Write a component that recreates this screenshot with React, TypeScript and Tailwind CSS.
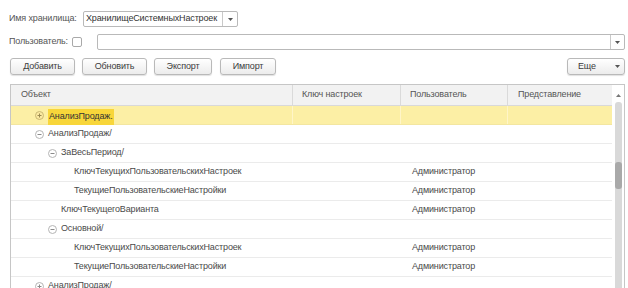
import React from "react";

const Arrow = () => (
  <svg width="5" height="3" viewBox="0 0 5 3"><path d="M0 0h5L2.5 3z" fill="#555" /></svg>
);

const TreeIcon = ({ plus, yellow }: { plus?: boolean; yellow?: boolean }) => (
  <svg width="9" height="9" viewBox="0 0 9 9" className="shrink-0">
    <circle cx="4.5" cy="4.5" r="4" fill={yellow ? "#fbe9a0" : "#fff"} stroke={yellow ? "#c9b873" : "#b4b4b4"} />
    <path d="M2.5 4.5h4" stroke={yellow ? "#9a8a50" : "#8a8a8a"} strokeWidth="1" />
    {plus && <path d="M4.5 2.5v4" stroke={yellow ? "#9a8a50" : "#8a8a8a"} strokeWidth="1" />}
  </svg>
);

const Btn = ({ children, w }: { children: React.ReactNode; w: string }) => (
  <div
    className={`${w} h-[17px] flex items-center justify-center rounded-[3px] border border-[#b9b9b9] bg-gradient-to-b from-white to-[#ececec] shadow-[0_1px_1px_rgba(0,0,0,0.12)] text-[#3c3c3c]`}
  >
    {children}
  </div>
);

type Row = { level: number; text: string; icon?: "plus" | "minus"; user?: string; selected?: boolean };

const rows: Row[] = [
  { level: 0, text: "АнализПродаж.", icon: "plus", selected: true },
  { level: 0, text: "АнализПродаж/", icon: "minus" },
  { level: 1, text: "ЗаВесьПериод/", icon: "minus" },
  { level: 2, text: "КлючТекущихПользовательскихНастроек", user: "Администратор" },
  { level: 2, text: "ТекущиеПользовательскиеНастройки", user: "Администратор" },
  { level: 1, text: "КлючТекущегоВарианта", user: "Администратор" },
  { level: 1, text: "Основной/", icon: "minus" },
  { level: 2, text: "КлючТекущихПользовательскихНастроек", user: "Администратор" },
  { level: 2, text: "ТекущиеПользовательскиеНастройки", user: "Администратор" },
  { level: 0, text: "АнализПродаж/", icon: "plus" },
];

const iconPad = ["pl-[24px]", "pl-[37px]", "pl-[50px]"];
const leafPad = ["pl-[37px]", "pl-[50px]", "pl-[63px]"];

export default function App() {
  return (
    <div className="w-[628px] h-[288px] overflow-hidden bg-white text-[#4a4a4a] text-[9px] tracking-[-0.15px] font-['Liberation_Sans',Arial,sans-serif]">
      <div className="pt-[11px] pl-[9px] pr-[3px] flex flex-col">
        {/* Row 1 */}
        <div className="flex items-center h-[16px]">
          <div className="w-[74px] text-[#555]">Имя хранилища:</div>
          <div className="flex h-[16px] border border-[#b9b9b9] rounded-[2px]">
            <div className="w-[138px] pl-[2px] flex items-center text-[#333] overflow-hidden whitespace-nowrap">ХранилищеСистемныхНастроек</div>
            <div className="w-[15px] shrink-0 border-l border-[#c9c9c9] flex items-center justify-center">
              <Arrow />
            </div>
          </div>
        </div>
        {/* Row 2 */}
        <div className="flex items-center h-[16px] mt-[7px]">
          <div className="w-[63px] text-[#555] whitespace-nowrap">Пользователь:</div>
          <div className="w-[10px] h-[10px] border border-[#a9a9a9] rounded-[2px] bg-white" />
          <div className="ml-[15px] flex-1 flex h-[16px] border border-[#b9b9b9] rounded-[2px]">
            <div className="flex-1" />
            <div className="w-[14px] border-l border-[#c9c9c9] flex items-center justify-center">
              <Arrow />
            </div>
          </div>
        </div>
        {/* Row 3 buttons */}
        <div className="flex items-center h-[17px] mt-[8px] pl-[1px]">
          <Btn w="w-[65px]">Добавить</Btn>
          <div className="ml-[7px]"><Btn w="w-[65px]">Обновить</Btn></div>
          <div className="ml-[7px]"><Btn w="w-[58px]">Экспорт</Btn></div>
          <div className="ml-[8px]"><Btn w="w-[56px]">Импорт</Btn></div>
          <div className="ml-auto">
            <div className="w-[58px] h-[17px] flex items-center rounded-[3px] border border-[#b9b9b9] bg-gradient-to-b from-white to-[#ececec] shadow-[0_1px_1px_rgba(0,0,0,0.12)] text-[#3c3c3c]">
              <span className="ml-[10px]">Еще</span>
              <span className="ml-auto mr-[4px] flex"><Arrow /></span>
            </div>
          </div>
        </div>
        {/* Table */}
        <div className="mt-[9px] ml-[1px] border border-[#c6c6c6] flex h-[220px]">
          <div className="flex-1 flex flex-col">
            <div className="h-[21px] shrink-0 bg-[#f2f2f2] border-b border-[#d9d9d9] flex text-[#555]">
              <div className="w-[282px] border-r border-[#dadada] pl-[10px] flex items-center">Объект</div>
              <div className="w-[108px] border-r border-[#dadada] pl-[9px] flex items-center">Ключ настроек</div>
              <div className="w-[107px] border-r border-[#dadada] pl-[9px] flex items-center">Пользователь</div>
              <div className="flex-1 pl-[10px] flex items-center">Представление</div>
            </div>
            {rows.map((r, i) => (
              <div
                key={i}
                className={`h-[19px] shrink-0 flex border-b ${r.selected ? "bg-[#fcefa5] border-[#f3e6a0]" : "border-[#ebebeb]"}`}
              >
                <div
                  className={`w-[282px] flex items-center ${r.selected ? "border-r border-[#fff5c8]" : ""} ${r.icon ? iconPad[r.level] : leafPad[r.level]}`}
                >
                  {r.icon && <TreeIcon plus={r.icon === "plus"} yellow={r.selected} />}
                  {r.selected ? (
                    <span className="ml-[4px] h-[16px] mt-[3px] px-[1px] flex items-center bg-[#f8d63a] text-[#333]">{r.text}</span>
                  ) : (
                    <span className={r.icon ? "ml-[4px]" : ""}>{r.text}</span>
                  )}
                </div>
                <div className={`w-[108px] ${r.selected ? "border-r border-[#fff5c8]" : ""}`} />
                <div className={`w-[107px] pl-[11px] flex items-center ${r.selected ? "border-r border-[#fff5c8]" : ""}`}>
                  {r.user}
                </div>
                <div className="flex-1" />
              </div>
            ))}
          </div>
          {/* Scrollbar */}
          <div className="w-[12px] flex flex-col items-center">
            <div className="h-[21px] w-full flex items-center justify-center">
              <svg width="5" height="3" viewBox="0 0 5 3"><path d="M0 3h5L2.5 0z" fill="#777" /></svg>
            </div>
            <div className="mt-[-4px] w-[7px] flex-1 bg-[#d9d9d9] rounded-[3px] flex flex-col">
              <div className="mt-[60px] h-[27px] bg-[#a9a9a9] rounded-[3px]" />
            </div>
          </div>
        </div>
      </div>
    </div>
  );
}
